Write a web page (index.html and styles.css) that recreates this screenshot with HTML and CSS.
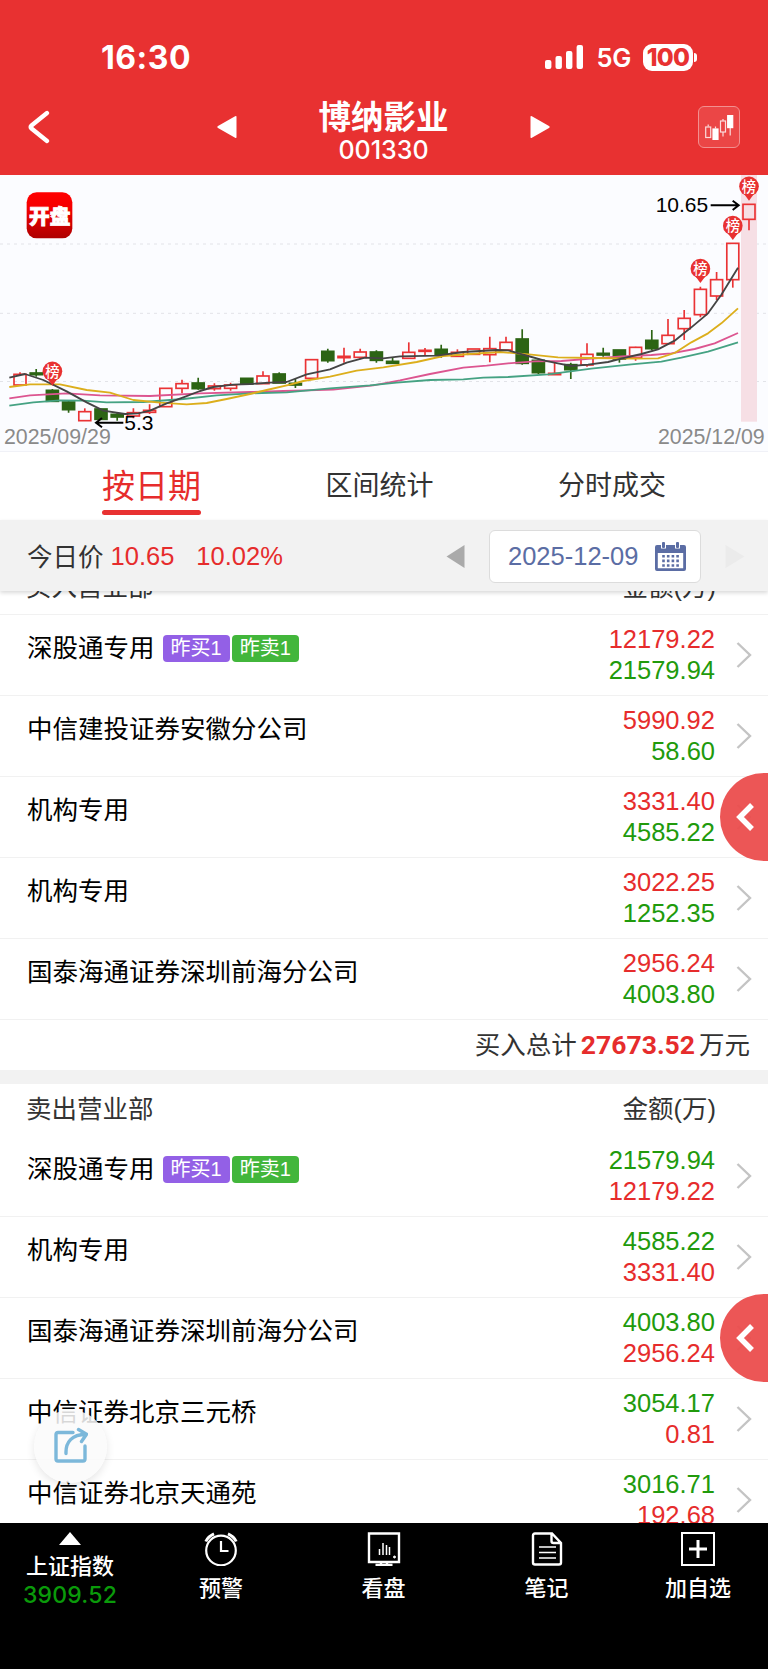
FILE: index.html
```html
<!DOCTYPE html>
<html lang="zh-CN">
  <head>
    <meta charset="UTF-8" />
    <meta name="viewport" content="width=device-width, initial-scale=1.0" />
    <title>博纳影业 001330</title>
    <link rel="stylesheet" href="styles.css">
  </head>
  <body>
    <header class="header">
      <div class="status">
        <span class="time">16:30</span>
        <div class="status-right">
          <svg class="signal" width="38" height="24" viewBox="0 0 38 24" fill="#fff">
            <rect x="0" y="15" width="6.4" height="9" rx="2" />
            <rect x="10.5" y="11" width="6.4" height="13" rx="2" />
            <rect x="21" y="6" width="6.4" height="18" rx="2" />
            <rect x="31.6" y="0" width="6.4" height="24" rx="2" />
          </svg>
          <span class="net">5G</span>
          <span class="battery">100</span>
          <span class="battery-tip"></span>
        </div>
      </div>
      <div class="titlebar">
        <svg class="back" width="24" height="34" viewBox="0 0 24 34">
          <path d="M21 3 5.500 15.500q-1.800 1.500 0 3L21 31" fill="none" stroke="#fff" stroke-width="4.300" stroke-linecap="round" />
        </svg>
        <div class="stock">
          <svg width="20" height="24" viewBox="0 0 20 24" fill="#fff"><path d="M19.500 1.800v20.400q0 1.300-1.400.5L1 13q-1.400-1 0-2L18.100 1.300q1.400-.8 1.400.5z" /></svg>
          <div class="stock-name">
            <h1>博纳影业</h1>
            <p>001330</p>
          </div>
          <svg width="20" height="24" viewBox="0 0 20 24" fill="#fff"><path d="M.5 1.800v20.400q0 1.300 1.400.5L19 13q1.400-1 0-2L1.900 1.300Q.5.5.5 1.800z" /></svg>
        </div>
        <div class="kbtn">
          <svg width="30" height="26" viewBox="0 0 30 26" fill="none" stroke="#fbdcdc" stroke-width="1.200">
            <path d="M4.200 10.500v2M11.500 12.500v2M19 5v2M19 18v4.500M26.200 14v7.500" />
            <rect x="1.700" y="13" width="5" height="10.500" />
            <rect x="9" y="15" width="5" height="10.500" fill="#fff" stroke="#fff" />
            <rect x="16.500" y="7" width="5" height="11" />
            <rect x="23.700" y="1.600" width="5" height="12" fill="#fff" stroke="#fff" />
          </svg>
        </div>
      </div>
    </header>

    <svg class="chart" viewBox="0 15 2304 828">
      <defs>
        <linearGradient id="logoBg" x1="0" y1="0" x2="0" y2="1">
          <stop offset="0" stop-color="#ff0000" />
          <stop offset=".35" stop-color="#f40000" />
          <stop offset="1" stop-color="#ae0000" />
        </linearGradient>
      </defs>
      <g class="grid">
        <path d="M0 222H2304M0 430H2304M0 634.500H2304" />
      </g>
      <rect class="today" x="2223" y="15" width="48" height="740" />
      <g id="candles"></g>
      <g class="ma">
        <path class="ma20" d="M28 685 90 676 200 670 300 676 450 678 600 670 750 666 850 663 1000 659 1120 646 1200 631 1290 612 1390 593 1460 587 1524 580 1604 574 1684 573 1774 566 1864 559 1954 555 2014 550 2084 537 2144 520 2214 489" />
        <path class="ma30" d="M28 707 100 697 180 691 250 692 320 697 430 696 550 687 650 676 750 670 860 667 990 655 1110 646 1190 638 1290 630 1390 628 1450 623 1524 621 1644 613 1774 596 1894 583 1984 575 2044 563 2124 545 2214 517" />
        <path class="ma10" d="M28 651 90 643 180 643 260 660 330 668 400 690 480 698 560 703 620 699 680 687 750 672 800 660 870 644 910 633 990 620 1070 602 1150 592 1250 576 1330 558 1410 552 1500 546 1594 554 1674 562 1774 564 1904 566 1974 565 2024 549 2074 517 2124 490 2164 460 2214 415" />
        <path class="ma5" d="M28 623 75 612 130 630 200 664 260 697 310 722 375 732 415 730 450 722 500 700 550 682 600 663 640 651 700 644 750 642 810 638 860 636 920 613 990 598 1040 578 1095 563 1150 565 1200 559 1310 557 1390 546 1490 540 1524 541 1584 558 1634 572 1674 580 1714 588 1764 584 1824 576 1864 566 1924 552 1974 538 2024 512 2074 472 2124 430 2164 374 2214 293" />
      </g>
      <g id="pins"></g>
      <g class="price">
        <text x="373" y="779">5.3</text>
        <path d="M370 758H290M306 744 288 758 306 772" />
        <text x="1967" y="127">10.65</text>
        <path d="M2132 106H2214M2198 92 2216 106 2198 120" />
      </g>
      <text class="date" x="12" y="821">2025/09/29</text>
      <text class="date" x="2294" y="821" text-anchor="end">2025/12/09</text>
      <rect x="80" y="67" width="137" height="138" rx="30" fill="url(#logoBg)" />
      <text class="logo" x="149" y="161" text-anchor="middle">开盘</text>
    </svg>

    <nav class="tabs">
      <a class="tab active">按日期</a>
      <a class="tab">区间统计</a>
      <a class="tab">分时成交</a>
    </nav>

    <div class="filter">
      <span class="label">今日价</span>
      <span class="red">10.65</span>
      <span class="red pct">10.02%</span>
      <svg class="prev" width="19" height="25" viewBox="0 0 19 25"><path d="M18.500 1v23L.5 12.500z" fill="#aaa" /></svg>
      <div class="datebox">
        <span>2025-12-09</span>
        <svg width="31" height="29" viewBox="0 0 31 29" fill="#5b6da4">
          <path d="M2 3h4v3.500h5V3h9v3.500h5V3h4q2 0 2 2v22q0 2-2 2H2q-2 0-2-2V5q0-2 2-2zm.8 8v15.200h25.400V11z" fill-rule="evenodd" />
          <rect x="7" y="0" width="3" height="6" rx="1" />
          <rect x="21" y="0" width="3" height="6" rx="1" />
          <path d="M8.500 13v12M13.200 13v12M17.900 13v12M22.600 13v12" stroke="#5b6da4" stroke-width="2.600" stroke-dasharray="2.600 2" />
        </svg>
      </div>
      <svg class="next" width="20" height="25" viewBox="0 0 20 25"><path d="M.5 1v23L19.500 12.500z" fill="#ebebeb" /></svg>
    </div>

    <main class="lists">
      <section class="scrolled">
        <div class="list-head line"><span>买入营业部</span><span>金额(万)</span></div>
        <div id="buy"></div>
        <div class="total">买入总计<b>27673.52</b>万元</div>
        <a class="side-tab"><svg width="20" height="30" viewBox="0 0 20 30"><path d="M17 3 5 15 17 27" /></svg></a>
      </section>
      <section class="sell">
        <div class="list-head"><span>卖出营业部</span><span>金额(万)</span></div>
        <div id="sell"></div>
        <a class="side-tab"><svg width="20" height="30" viewBox="0 0 20 30"><path d="M17 3 5 15 17 27" /></svg></a>
      </section>
      <a class="share">
        <svg width="36" height="38" viewBox="0 0 36 38" fill="none" stroke="#7cb8da" stroke-width="3.400" stroke-linecap="round" stroke-linejoin="round">
          <path d="M21 5.500H6q-2 0-2 2V32q0 2 2 2h25q2 0 2-2V19" />
          <path d="M14 26.500C13.500 15 20 7.500 34 7.200M26.500 2.500l8 4.700L29.500 14.500" />
        </svg>
      </a>
    </main>

    <footer class="bottom">
      <a class="item index">
        <svg width="22" height="13" viewBox="0 0 22 13"><path d="M11 0 22 13H0z" fill="#fff" /></svg>
        <span>上证指数</span>
        <em>3909.52</em>
      </a>
      <a class="item">
        <svg width="34" height="34" viewBox="0 0 34 34" fill="none" stroke="#fff" stroke-width="2.200">
          <circle cx="17" cy="18.500" r="14.800" />
          <path d="M17 9v10h7.500" />
          <path d="M1.800 9.500Q4 4.500 10 1.800M32.200 9.500Q30 4.500 24 1.800" stroke-width="3" />
        </svg>
        <span>预警</span>
      </a>
      <a class="item">
        <svg width="34" height="34" viewBox="0 0 34 34" fill="none" stroke="#fff" stroke-width="2.400">
          <path d="M2 1.500h30v28.500H2zM14 30v3M20 30v3M8.500 33h17" />
          <path d="M12.500 17v6M16 11v12M19.500 13v10M22.500 15v8" stroke-width="1.500" />
          <circle cx="27.500" cy="25" r="1" fill="#fff" stroke-width="1" />
        </svg>
        <span>看盘</span>
      </a>
      <a class="item">
        <svg width="34" height="34" viewBox="0 0 34 34" fill="none" stroke="#fff" stroke-width="2.400">
          <path d="M22 1.500H5q-2 0-2 2v27q0 2 2 2h24q2 0 2-2V11zM21.500 2v7q0 2 2 2h7" />
          <path d="M9 15h17M9 20.500h17M9 26h17" stroke-width="1.600" />
        </svg>
        <span>笔记</span>
      </a>
      <a class="item">
        <svg width="34" height="34" viewBox="0 0 34 34" fill="none" stroke="#fff">
          <rect x="1" y="1" width="32" height="32" stroke-width="2" />
          <path d="M17 8v18M8 17h18" stroke-width="3" />
        </svg>
        <span>加自选</span>
      </a>
    </footer>

    <script>
      // [up, body top, body bottom, high, low]
      const candles = [
        [1, 613, 645, 607, 645], [0, 609, 614, 597, 620], [0, 661, 694, 657, 694],
        [0, 696, 719, 692, 728], [1, 725, 752, 715, 752], [0, 717, 748, 717, 748],
        [0, 733, 741, 728, 752], [1, 728, 738, 715, 745], [1, 721, 727, 703, 732],
        [1, 655, 710, 655, 710], [1, 641, 655, 629, 670], [0, 639, 656, 623, 659],
        [1, 648, 656, 640, 662], [1, 645, 655, 638, 662], [0, 625, 642, 625, 642],
        [1, 618, 641, 604, 641], [0, 612, 639, 607, 639], [0, 640, 645, 627, 654],
        [1, 569, 625, 569, 625], [0, 544, 572, 536, 578], [1, 559, 563, 533, 578],
        [1, 546, 562, 536, 568], [0, 546, 571, 541, 578], [0, 574, 580, 562, 582],
        [1, 547, 565, 517, 565], [1, 541, 544, 534, 556], [0, 538, 555, 524, 563],
        [1, 547, 559, 538, 559], [1, 537, 553, 537, 553], [1, 536, 554, 500, 577],
        [1, 517, 540, 500, 543], [0, 507, 580, 478, 584], [0, 571, 608, 564, 612],
        [1, 610, 614, 578, 614], [0, 584, 599, 578, 627], [1, 553, 585, 520, 590],
        [0, 550, 555, 533, 560], [0, 540, 567, 540, 578], [1, 532, 564, 530, 572],
        [0, 511, 536, 480, 541], [1, 496, 521, 447, 524], [1, 445, 476, 420, 510],
        [1, 358, 434, 350, 442], [1, 329, 378, 306, 390], [1, 220, 329, 220, 353],
        [1, 103, 148, 103, 181]
      ];
      const pitch = 48.6;

      document.getElementById("candles").innerHTML = candles
        .map(([up, top, bottom, high, low], i) => {
          const x = 60 + i * pitch;
          return `<g class="${up ? "up" : "down"}">
            <path d="M${x} ${high}V${top}M${x} ${bottom}V${low}" />
            <rect x="${x - 18}" y="${top}" width="36" height="${bottom - top}" />
          </g>`;
        })
        .join("");

      const pins = [[2, 604], [42, 296], [44, 167], [45, 49]];
      document.getElementById("pins").innerHTML = pins
        .map(([i, y]) => {
          const x = 60 + i * pitch;
          return `<g class="pin">
            <path d="M${x} ${y + 43}L${x - 14} ${y + 24}H${x + 14}Z" />
            <circle cx="${x}" cy="${y}" r="29.5" />
            <text x="${x}" y="${y + 16}" text-anchor="middle">榜</text>
          </g>`;
        })
        .join("");

      const buy = [
        ["深股通专用", "12179.22", "21579.94", true],
        ["中信建投证券安徽分公司", "5990.92", "58.60"],
        ["机构专用", "3331.40", "4585.22"],
        ["机构专用", "3022.25", "1252.35"],
        ["国泰海通证券深圳前海分公司", "2956.24", "4003.80"]
      ];
      const sell = [
        ["深股通专用", "21579.94", "12179.22", true],
        ["机构专用", "4585.22", "3331.40"],
        ["国泰海通证券深圳前海分公司", "4003.80", "2956.24"],
        ["中信证券北京三元桥", "3054.17", "0.81"],
        ["中信证券北京天通苑", "3016.71", "192.68"]
      ];

      function renderRows(id, rows, colors) {
        document.getElementById(id).innerHTML = rows
          .map(([name, a, b, tags]) => `
            <div class="row">
              <div class="name">${name}${tags ? '<i class="tag buy">昨买1</i><i class="tag sold">昨卖1</i>' : ""}</div>
              <div class="amount"><p class="${colors[0]}">${a}</p><p class="${colors[1]}">${b}</p></div>
              <svg class="arrow" width="16" height="28" viewBox="0 0 16 28"><path d="M1.500 2 14 14 1.500 26" /></svg>
            </div>`)
          .join("");
      }
      renderRows("buy", buy, ["red", "green"]);
      renderRows("sell", sell, ["green", "red"]);
    </script>
  </body>
</html>
```
FILE: styles.css
```css
* {
  box-sizing: border-box;
  margin: 0;
  padding: 0;
}
body {
  width: 768px;
  height: 1669px;
  display: flex;
  flex-direction: column;
  overflow: hidden;
  background: #fff;
  color: #333;
  font-family: "Liberation Sans", "Noto Sans CJK SC", sans-serif;
  font-size: 25.5px;
}
svg {
  display: block;
  flex: none;
}
.red {
  color: #e62c2c;
}
.green {
  color: #219a0c;
}

/* header */
.header {
  height: 175px;
  flex: none;
  padding-top: 39px;
  background: #e83131;
  color: #fff;
}
.status {
  height: 36px;
  display: flex;
  align-items: center;
  justify-content: space-between;
  padding: 0 71px 0 101px;
  font-family: Inter, sans-serif;
}
.time {
  font-size: 32px;
  font-weight: 700;
  letter-spacing: 0.5px;
}
.status-right {
  display: flex;
  align-items: center;
}
.net {
  margin: 1px 12px 0 13px;
  font-size: 25.5px;
  font-weight: 600;
  letter-spacing: -0.3px;
}
.battery {
  width: 50px;
  height: 27px;
  border-radius: 9px;
  background: #fff;
  color: #e83131;
  font-size: 24.5px;
  font-weight: 800;
  line-height: 27px;
  text-align: center;
  letter-spacing: -0.8px;
}
.battery-tip {
  width: 3px;
  height: 9px;
  margin-left: 1px;
  border-radius: 0 3px 3px 0;
  background: #fff;
}
.titlebar {
  height: 100px;
  display: flex;
  align-items: center;
  justify-content: space-between;
  padding: 4px 28px 0 26px;
}
.back {
  margin-right: 19px;
}
.stock {
  width: 334px;
  display: flex;
  align-items: center;
  justify-content: space-between;
}
.stock-name {
  padding-top: 8px;
  text-align: center;
}
.stock-name h1 {
  font-size: 32.5px;
  line-height: 38px;
  font-weight: 700;
}
.stock-name p {
  font-family: Inter, sans-serif;
  font-size: 25px;
  line-height: 27px;
  font-weight: 500;
  letter-spacing: 0;
}
.kbtn {
  width: 42px;
  height: 42px;
  display: flex;
  align-items: center;
  justify-content: center;
  border: 1px solid #f29090;
  border-radius: 6px;
  background: #eb4646;
}

/* k-line chart */
.chart {
  width: 768px;
  height: 276px;
  background: #fbfcff;
}
.grid path {
  stroke: #e2e3e8;
  stroke-width: 3;
  stroke-dasharray: 9 12;
}
.today {
  fill: #f6dfe5;
}
.up {
  fill: none;
  stroke: #ea3335;
  stroke-width: 5;
}
.down {
  fill: #2c6414;
  stroke: #2c6414;
  stroke-width: 5;
}
.ma path {
  fill: none;
  stroke-width: 5.5;
  stroke-linejoin: round;
}
.ma .ma5 {
  stroke: #444;
}
.ma .ma10 {
  stroke: #dcae1c;
}
.ma .ma20 {
  stroke: #dc5590;
}
.ma .ma30 {
  stroke: #45a283;
}
.pin {
  fill: #e83131;
}
.pin text {
  fill: #fff;
  font-size: 43px;
  font-weight: 500;
}
.price text {
  fill: #000;
  font-size: 63px;
}
.price path {
  fill: none;
  stroke: #000;
  stroke-width: 6;
}
.date {
  fill: #8a8a8a;
  font-size: 64px;
}
.logo {
  fill: #fff;
  stroke: #fff;
  stroke-width: 2.5;
  font-size: 62px;
  font-weight: 900;
}

/* tabs */
.tabs {
  height: 69px;
  flex: none;
  display: flex;
  justify-content: space-between;
  padding: 0 102px;
  border-top: 1px solid #f0f1f7;
}
.tab {
  height: 63px;
  font-size: 27px;
  line-height: 69px;
}
.tab.active {
  position: relative;
  color: #e62c2c;
  font-size: 33px;
}
.tab.active::after {
  content: "";
  position: absolute;
  left: 0;
  right: 0;
  bottom: 0;
  height: 5px;
  border-radius: 3px;
  background: #e83131;
}

/* price and date */
.filter {
  position: relative;
  z-index: 1;
  height: 71px;
  flex: none;
  display: flex;
  align-items: center;
  padding: 2px 23px 0 27px;
  background: #f2f2f2;
  box-shadow: 0 2px 4px rgba(0, 0, 0, 0.15);
}
.label {
  margin: 0 7px 5px 0;
}
.pct {
  margin-left: 22px;
}
.prev {
  margin: 0 24px 0 auto;
}
.datebox {
  width: 212px;
  height: 53px;
  display: flex;
  align-items: center;
  justify-content: space-between;
  padding: 0 14px 0 18px;
  border: 1.5px solid #dcdcdc;
  border-radius: 6px;
  background: #fff;
  color: #5b6da4;
}
.next {
  margin-left: 24px;
}

/* lists */
.lists {
  position: relative;
  height: 932px;
  flex: none;
  overflow: hidden;
}
.scrolled,
.sell {
  position: relative;
}
.scrolled {
  margin-top: -28px;
}
.list-head {
  height: 52px;
  display: flex;
  align-items: center;
  justify-content: space-between;
  padding: 0 52px 8px 26px;
}
.line,
.row {
  border-bottom: 1px solid #f1f1f1;
}
.row {
  height: 81px;
  display: flex;
  align-items: center;
  padding: 0 16px 0 27px;
  color: #000;
}
.name {
  display: flex;
  align-items: center;
  margin-bottom: 19px;
}
.tag {
  height: 27px;
  margin: 5px 0 0 2px;
  padding: 0 8px;
  border-radius: 4px;
  color: #fff;
  font-size: 20px;
  font-style: normal;
  line-height: 26px;
}
.tag.buy {
  margin-left: 8px;
  background: #9360e6;
}
.tag.sold {
  background: #42b63b;
}
.amount {
  margin-left: auto;
  text-align: right;
  line-height: 31.5px;
}
.arrow {
  margin-left: 21px;
}
.arrow path {
  fill: none;
  stroke: #c4c4c4;
  stroke-width: 2.4;
}
.total {
  height: 50px;
  padding-right: 18px;
  line-height: 50px;
  text-align: right;
}
.total b {
  margin: 0 4px;
  color: #e62c2c;
  font-family: Roboto, sans-serif;
  font-size: 26.5px;
}
.sell {
  border-top: 14px solid #f2f2f2;
}
.side-tab {
  position: absolute;
  right: 0;
  top: 210px;
  width: 48px;
  height: 88px;
  padding: 29px 0 0 15px;
  border-radius: 44px 0 0 44px;
  background: rgba(235, 77, 77, 0.95);
}
.side-tab path {
  fill: none;
  stroke: #fff;
  stroke-width: 5.5;
}
.share {
  position: absolute;
  left: 34px;
  top: 819px;
  width: 73px;
  height: 73px;
  padding: 17px 0 0 18px;
  border-radius: 50%;
  background: rgba(250, 250, 250, 0.86);
  box-shadow: 0 3px 9px rgba(0, 0, 0, 0.1);
}

/* bottom bar */
.bottom {
  height: 146px;
  flex: none;
  display: grid;
  grid-template-columns: 140px 162px 163px 163px 140px;
  background: #000;
  color: #fff;
}
.item {
  display: flex;
  flex-direction: column;
  align-items: center;
  padding-top: 9px;
  font-size: 22px;
  font-weight: 500;
  line-height: 32px;
}
.item span {
  margin-top: 7px;
}
.index span {
  margin-top: 6px;
}
.index em {
  color: #0a9a0a;
  font-family: Inter, sans-serif;
  font-size: 23px;
  font-style: normal;
  line-height: 24px;
  letter-spacing: 0.2px;
}
```
